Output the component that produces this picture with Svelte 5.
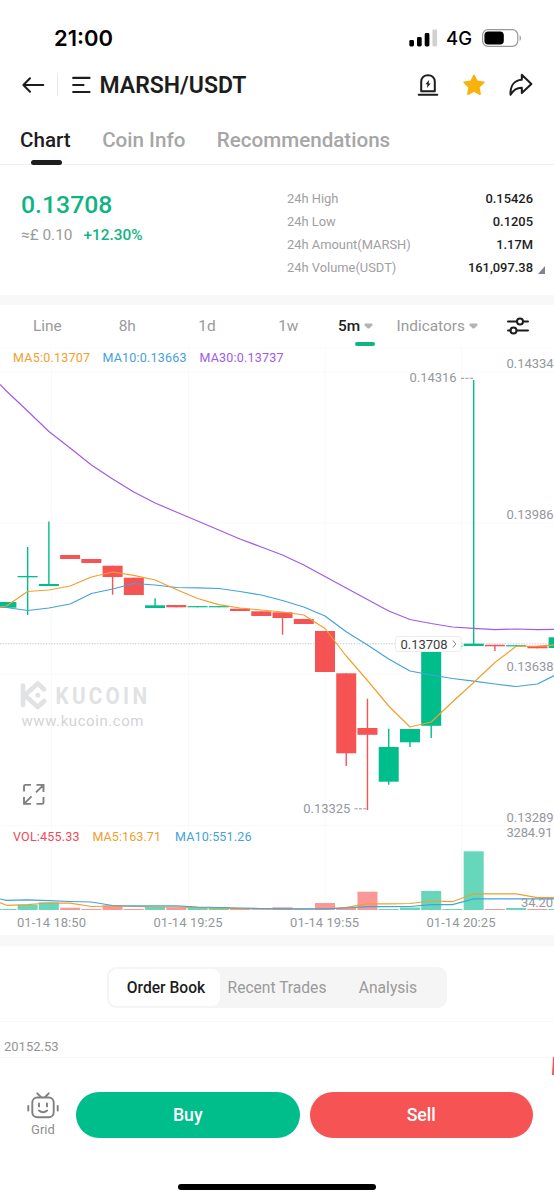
<script lang="ts">
	type Side = 'up' | 'down';

	interface Candle {
		side: Side;
		top: number;
		bottom: number;
		high?: number;
		low?: number;
		vol: number;
	}

	const STEP = 21.24;
	const FIRST_X = 6.4;
	const VOL_BASE = 910;

	const tabs = ['Chart', 'Coin Info', 'Recommendations'];
	const bookTabs = ['Order Book', 'Recent Trades', 'Analysis'];

	const stats = [
		{ label: '24h High', value: '0.15426' },
		{ label: '24h Low', value: '0.1205' },
		{ label: '24h Amount(MARSH)', value: '1.17M' },
		{ label: '24h Volume(USDT)', value: '161,097.38' }
	];

	// all y values share the chart viewBox
	const candles: Candle[] = [
		{ side: 'up', top: 602, bottom: 607.7, vol: 909 },
		{ side: 'up', top: 576, bottom: 577.3, high: 547, low: 615, vol: 904.7 },
		{ side: 'up', top: 584, bottom: 586, high: 521.5, vol: 902.3 },
		{ side: 'down', top: 555, bottom: 559, vol: 907.7 },
		{ side: 'down', top: 559, bottom: 563, vol: 909 },
		{ side: 'down', top: 565.7, bottom: 577, low: 594.7, vol: 905.3 },
		{ side: 'down', top: 577.7, bottom: 595, vol: 909 },
		{ side: 'up', top: 605.3, bottom: 608, high: 598.3, vol: 907 },
		{ side: 'down', top: 605, bottom: 607.3, vol: 907.3 },
		{ side: 'up', top: 606.1, bottom: 607.3, vol: 908 },
		{ side: 'up', top: 606.1, bottom: 607.3, vol: 907.7 },
		{ side: 'down', top: 608.7, bottom: 611, vol: 908.7 },
		{ side: 'down', top: 611.3, bottom: 616, vol: 909.2 },
		{ side: 'down', top: 612.3, bottom: 618, low: 634.7, vol: 907.3 },
		{ side: 'down', top: 619, bottom: 624, vol: 909.2 },
		{ side: 'down', top: 631, bottom: 672, vol: 903 },
		{ side: 'down', top: 673.3, bottom: 753.3, low: 766, vol: 908 },
		{ side: 'down', top: 728, bottom: 734.8, high: 698.7, low: 810, vol: 891.7 },
		{ side: 'up', top: 747, bottom: 781.7, high: 728.7, low: 784.7, vol: 909 },
		{ side: 'up', top: 729, bottom: 742.3, low: 747, vol: 907.5 },
		{ side: 'up', top: 645.5, bottom: 725.8, low: 738, vol: 891 },
		{ side: 'up', top: 645.7, bottom: 646.8, vol: 909 },
		{ side: 'up', top: 643.7, bottom: 646, high: 380, vol: 851.3 },
		{ side: 'down', top: 644.8, bottom: 646.3, low: 651, vol: 909 },
		{ side: 'up', top: 645.2, bottom: 646.4, vol: 908 },
		{ side: 'down', top: 646.2, bottom: 648.3, vol: 909 },
		{ side: 'up', top: 637.3, bottom: 648, vol: 909 }
	];

	const ma30 = [391, 411, 431.5, 448, 465, 479, 492, 503, 512, 521, 530, 539, 547, 555, 565, 576.5, 588, 599.5, 611, 619.5, 623.5, 627, 628.3, 629.6, 629, 629.7, 629.3];
	const ma5 = [606, 591.5, 590, 586, 577, 572, 575.3, 580, 589.5, 598.5, 604.7, 608, 610, 612, 615, 628.5, 656, 680.5, 706, 727, 722, 702, 682.5, 662.5, 646.3, 646, 644.8];
	const ma10 = [607.5, 610.5, 608, 604, 593.5, 589, 583.5, 585, 587.5, 587.8, 588.5, 591.5, 595, 600.5, 607, 616, 631.7, 645, 659, 671, 675, 678.5, 681.2, 684, 686.5, 684, 673.5];
	const vol5 = [905.3, 904.7, 903, 903.2, 906.5, 906, 906.5, 907, 907, 907.7, 908.2, 908.6, 908.8, 909, 909, 909, 907.3, 903.8, 903.8, 903.5, 901, 901.7, 893.8, 893.8, 893.8, 897.6, 897.6];
	const vol10 = [900.3, 899.8, 900.6, 901.5, 902, 905.5, 905.8, 905.8, 905.8, 907, 907.5, 908, 908.5, 908.8, 908.8, 908.8, 908, 906.7, 906.7, 906.5, 904.6, 904.6, 898.8, 898.8, 898.8, 898.8, 898.8];

	const gridRows = [372, 523, 674.3, 825.5];
	const gridCols = [51.5, 188.5, 325, 461.5];

	const priceTicks = [
		{ y: 368.4, label: '0.14334' },
		{ y: 519.4, label: '0.13986' },
		{ y: 671, label: '0.13638' },
		{ y: 822, label: '0.13289' }
	];
	const timeTicks = [
		{ x: 51.5, label: '01-14 18:50' },
		{ x: 188, label: '01-14 19:25' },
		{ x: 324.6, label: '01-14 19:55' },
		{ x: 461, label: '01-14 20:25' }
	];

	let activeTab = $state('Chart');
	let activeBook = $state('Order Book');

	function cx(i: number): number {
		return FIRST_X + i * STEP;
	}

	function line(values: number[], startY: number): string {
		return `0,${startY} ` + values.map((y, i) => `${cx(i).toFixed(1)},${y}`).join(' ');
	}
</script>

{#snippet caret()}
	<svg width="9" height="6" viewBox="0 0 9 6"><path d="M.6.4h7.8v1.8L5.2 5.4H3.8L.6 2.2z" /></svg>
{/snippet}

<div class="screen">
	<div class="status">
		<span class="time">21:00</span>
		<div class="signals">
			<svg width="29" height="18" viewBox="0 0 29 18">
				<rect x="0.3" y="11" width="4.7" height="6.5" rx="1.4" />
				<rect x="8" y="8" width="4.7" height="9.5" rx="1.4" />
				<rect x="15.7" y="4" width="4.7" height="13.5" rx="1.4" />
				<rect x="23.4" y="0.5" width="4.7" height="17" rx="1.4" fill="#d1d1d1" />
			</svg>
			<span class="network">4G</span>
			<svg width="40" height="18" viewBox="0 0 40 18">
				<rect x="0.6" y="0.7" width="35.2" height="16.6" rx="5.4" fill="none" stroke="#999" stroke-width="1.2" />
				<rect x="2.4" y="2.5" width="19.4" height="13" rx="3.8" />
				<path d="M37.6 6.2c1.8.6 1.8 5 0 5.6z" fill="#999" />
			</svg>
		</div>
	</div>

	<header>
		<svg width="24" height="20" viewBox="0 0 24 20">
			<path d="M22.3 10H2.4M9 3.3 2.4 10 9 16.7" />
		</svg>
		<span class="divider"></span>
		<svg class="menu" width="20" height="20" viewBox="0 0 20 20">
			<path d="M2.2 2.9H18.5M2.2 10H12.5M2.2 17H18.5" />
		</svg>
		<h1>MARSH/USDT</h1>
		<div class="actions">
			<svg width="22" height="24" viewBox="0 0 22 24">
				<path d="M4.2 18.2V8.8C4.2 4.9 7 2.2 11 2.2s6.8 2.7 6.8 6.6v9.4zM1.7 21.8h18.6" />
				<path d="m12.2 7-3.8 4.2h2.1L9.9 15l3.8-4.4h-2.1z" fill="#1d1d1d" stroke="none" />
			</svg>
			<svg width="24" height="24" viewBox="0 0 24 24">
				<path
					d="m12 2.3 3 6 6.9 1-5 5 1.2 6.9-6.1-3.1-6.1 3.1 1.2-6.9-5-5 6.9-1z"
					fill="#f8b20c"
					stroke="#f8b20c"
					stroke-width="1.6"
				/>
			</svg>
			<svg width="24" height="24" viewBox="0 0 24 24">
				<path d="M12.8 6.7V1.8L22.4 11l-9.6 9.1v-5.3C8 14.7 4.2 17.4 1.5 21.7 1.2 13.5 4.8 7.2 12.8 6.7z" />
			</svg>
		</div>
	</header>

	<nav>
		{#each tabs as tab}
			<button class="tab" class:active={tab === activeTab} onclick={() => (activeTab = tab)}>{tab}</button>
		{/each}
	</nav>

	<section class="ticker">
		<div class="quote">
			<div class="price">0.13708</div>
			<div class="change"><span>≈£ 0.10</span><b>+12.30%</b></div>
		</div>
		<dl>
			{#each stats as stat}
				<div class="stat">
					<dt>{stat.label}</dt>
					<dd>{stat.value}</dd>
				</div>
			{/each}
		</dl>
		<svg class="corner" width="7" height="8" viewBox="0 0 7 8"><path d="M7 0v8H0z" fill="#7c8494" /></svg>
	</section>

	<div class="intervals">
		<span>Line</span>
		<span>8h</span>
		<span>1d</span>
		<span>1w</span>
		<span class="current">5m {@render caret()}</span>
		<span class="indicators">Indicators {@render caret()}</span>
		<svg class="settings" width="24" height="20" viewBox="0 0 24 20">
			<path d="M2 5.5h8.5M17.5 5.5H22M2 14.5h2.5M11.5 14.5H22" />
			<circle cx="14" cy="5.5" r="3" />
			<circle cx="7.5" cy="14.5" r="3" />
		</svg>
	</div>

	<svg class="chart" width="554" height="588" viewBox="0 347 554 588">
		<g stroke="#f9f9fa">
			{#each gridRows as y}
				<line x1="0" x2="554" y1={y} y2={y} />
			{/each}
			{#each gridCols as x}
				<line x1={x} x2={x} y1="347" y2="910" />
			{/each}
			<line x1="0" x2="554" y1="347" y2="347" />
		</g>

		<g>
			<g fill="none" stroke="#e1e2e4" stroke-width="4.6" stroke-linecap="round" stroke-linejoin="round">
				<path d="M23 685.5v19.5M23 695.3h3M44 689.2l-6.2-5.8-13 11.9 13 11.7 6.5-6" />
			</g>
			<circle cx="37.8" cy="695.3" r="2.5" fill="#e1e2e4" />
			<text class="brand" transform="translate(55.5 704) scale(0.88 1)" textLength="104">KUCOIN</text>
			<text class="site" x="21.5" y="726" textLength="122">www.kucoin.com</text>
		</g>

		<line x1="0" x2="554" y1="643.8" y2="643.8" stroke="#bfc1c4" stroke-dasharray="1.2 1.5" />

		{#each candles as candle, i}
			<g class={candle.side}>
				<rect x={cx(i) - 10} y={candle.top} width="20" height={candle.bottom - candle.top} />
				<rect
					x={cx(i) - 0.7}
					y={candle.high ?? candle.top}
					width="1.4"
					height={(candle.low ?? candle.bottom) - (candle.high ?? candle.top)}
				/>
				<rect class="vol" x={cx(i) - 10} y={candle.vol} width="20" height={VOL_BASE - candle.vol} />
			</g>
		{/each}

		<g fill="none" stroke-width="1.2" stroke-linejoin="round">
			<polyline points={line(ma30, 384.5)} stroke="#a25ae8" />
			<polyline points={line(ma10, 606.5)} stroke="#45a2da" />
			<polyline points={line(ma5, 607)} stroke="#f0a030" />
			<polyline points={line(vol5, 902.5)} stroke="#f0a030" />
			<polyline points={line(vol10, 899)} stroke="#45a2da" />
		</g>

		<g class="legend">
			<text x="13" y="362" textLength="77" fill="#f0a030">MA5:0.13707</text>
			<text x="102.5" y="362" textLength="84" fill="#45a2da">MA10:0.13663</text>
			<text x="199.5" y="362" textLength="84" fill="#a25ae8">MA30:0.13737</text>
			<text x="13" y="841" textLength="66.5" fill="#ee4b59">VOL:455.33</text>
			<text x="92.5" y="841" textLength="68.5" fill="#f0a030">MA5:163.71</text>
			<text x="175" y="841" textLength="76.5" fill="#45a2da">MA10:551.26</text>
		</g>

		<g class="axis">
			{#each priceTicks as tick}
				<text x="506.5" y={tick.y} textLength="47">{tick.label}</text>
			{/each}
			<text x="506.5" y="837" textLength="46">3284.91</text>
			<text x="521" y="906.5" textLength="32">34.20</text>
			{#each timeTicks as tick}
				<text x={tick.x} y="926.5" text-anchor="middle" textLength="69">{tick.label}</text>
			{/each}
			<text x="409.5" y="382.4" textLength="47">0.14316</text>
			<text x="303.3" y="813" textLength="47">0.13325</text>
		</g>
		<path d="M461 378.3h12M354.5 808.8h12" stroke="#94979d" stroke-dasharray="3.2 1.2" />

		<rect x="395.5" y="636.5" width="65.5" height="15" rx="2.5" fill="#fff" stroke="#ececee" />
		<text class="last" x="400.5" y="649" textLength="47">0.13708</text>
		<path d="m453 640.5 2.8 3.5-2.8 3.5" fill="none" stroke="#888" />

		<g fill="none" stroke="#7f8082" stroke-width="1.9">
			<path d="M31 784.9h-5.5q-1.5 0-1.5 1.5v5M43.5 796.9v5.5q0 1.5-1.5 1.5h-5.5M36.5 784.9h7v7M43 785.4l-7 7M31 803.9h-7v-7M24.5 803.4l7-7" />
		</g>
	</svg>

	<section class="book">
		<div class="segmented">
			{#each bookTabs as tab}
				<button class:active={tab === activeBook} onclick={() => (activeBook = tab)}>{tab}</button>
			{/each}
		</div>
		<div class="depth">
			<span>20152.53</span>
		</div>
	</section>

	<footer>
		<svg class="sliver" width="2" height="18" viewBox="0 0 2 18"><path d="M1 0h1v18H0z" fill="#f65354" /></svg>
		<div class="trade">
			<div class="grid-bot">
				<svg width="32" height="27" viewBox="0 0 32 27">
					<rect x="5.3" y="5.5" width="21.4" height="19.8" rx="5" />
					<path d="m10.3 1.3 3.5 3.7M21.7 1.3 18.2 5M12 11.5v3M20 11.5v3M12 18.5q4 3.3 8.2 0" />
					<path d="M1.3 14v4.5M30.7 14v4.5" />
				</svg>
				<span>Grid</span>
			</div>
			<button class="buy">Buy</button>
			<button class="sell">Sell</button>
		</div>
		<div class="home"></div>
	</footer>
</div>

<style>
	:global(body) {
		background: #fff;
	}

	.screen {
		width: 554px;
		height: 1200px;
		overflow: hidden;
		background: #fff;
		color: #1d1d1d;
		font-family: Roboto, 'Liberation Sans', sans-serif;
	}

	svg {
		display: block;
		flex: none;
	}

	button {
		padding: 0;
		border: 0;
		background: none;
		font: inherit;
		color: inherit;
	}

	.status {
		display: flex;
		align-items: center;
		justify-content: space-between;
		height: 60px;
		padding: 15px 32px 0 54px;
		box-sizing: border-box;
		font-family: Inter, sans-serif;
		color: #000;
	}

	.time {
		font-size: 22px;
		font-weight: 600;
	}

	.signals {
		display: flex;
		align-items: center;
	}

	.network {
		margin: 1px 10px 0 8px;
		font-size: 18.5px;
		font-weight: 500;
	}

	header {
		display: flex;
		align-items: center;
		height: 50px;
		padding: 0 21px;
	}

	header svg {
		fill: none;
		stroke: #1d1d1d;
		stroke-width: 2;
		stroke-linecap: round;
		stroke-linejoin: round;
	}

	.divider {
		width: 1px;
		height: 22px;
		margin: 0 13px 0 12px;
		background: #eaeaea;
	}

	header .menu {
		stroke-width: 2.2;
	}

	h1 {
		margin: 0 0 0 8.5px;
		font-size: 23px;
		font-weight: 600;
	}

	.actions {
		display: flex;
		align-items: center;
		gap: 23px;
		margin-left: auto;
	}

	nav {
		display: flex;
		gap: 31.5px;
		height: 55px;
		padding: 0 20px;
		border-bottom: 1px solid #efefef;
		box-sizing: border-box;
	}

	.tab {
		position: relative;
		height: 59px;
		box-sizing: border-box;
		font-size: 20.6px;
		font-weight: 500;
		color: #a6a6a6;
	}

	.tab.active {
		color: #1d1d1d;
	}

	.tab.active::after {
		content: '';
		position: absolute;
		left: 10.5px;
		top: 50px;
		width: 31px;
		height: 5px;
		border-radius: 3px;
		background: #1d1d1d;
	}

	.ticker {
		position: relative;
		display: flex;
		justify-content: space-between;
		height: 130px;
		padding: 22px 21px 0;
		box-sizing: border-box;
	}

	.price {
		font-size: 24.8px;
		line-height: 36px;
		font-weight: 500;
		color: #0fb483;
	}

	.change {
		display: flex;
		gap: 11px;
		font-size: 15.4px;
		line-height: 24px;
		color: #9a9a9a;
	}

	.change b {
		font-weight: 500;
		color: #0fb483;
	}

	dl {
		width: 246px;
		margin: 0;
	}

	.stat {
		display: flex;
		justify-content: space-between;
		font-size: 12.9px;
		line-height: 23.1px;
	}

	dt {
		color: #9fa0a2;
	}

	dd {
		margin: 0;
		font-weight: 500;
	}

	.corner {
		position: absolute;
		right: 9px;
		top: 101px;
	}

	.intervals {
		display: flex;
		align-items: center;
		height: 52px;
		padding: 0 24px 0 33px;
		border-top: 10px solid #f8f8f8;
		box-sizing: border-box;
		font-size: 15.4px;
		color: #9a9a9a;
	}

	.intervals span {
		margin-right: 57px;
	}

	.intervals span:nth-child(2),
	.intervals span:nth-child(3) {
		margin-right: 62.5px;
	}

	.intervals .current {
		position: relative;
		display: flex;
		align-items: center;
		gap: 3.5px;
		margin-left: -17.5px;
		margin-right: 24px;
		font-weight: 500;
		color: #1d1d1d;
	}

	.intervals .current::after {
		content: '';
		position: absolute;
		right: -2px;
		top: 25px;
		width: 20px;
		height: 3.5px;
		border-radius: 2px;
		background: #0fb483;
	}

	.intervals span svg {
		fill: #b3b3b3;
	}

	.intervals .indicators {
		display: flex;
		align-items: center;
		gap: 4px;
		margin-right: auto;
	}

	.settings {
		fill: none;
		stroke: #1d1d1d;
		stroke-width: 2;
		stroke-linecap: round;
	}

	.up {
		fill: #00bd8c;
	}

	.down {
		fill: #f65354;
	}

	.vol {
		opacity: 0.6;
	}

	.legend text {
		font-size: 12.5px;
	}

	.axis text {
		font-size: 13px;
		fill: #94979d;
	}

	.last {
		font-size: 13px;
		fill: #3d3d3d;
	}

	.brand {
		font-size: 23.5px;
		font-weight: 700;
		fill: #e1e2e4;
	}

	.site {
		font-size: 15px;
		fill: #d4d4d6;
	}

	.book {
		height: 122px;
		border-top: 11px solid #f8f8f8;
		box-sizing: border-box;
	}

	.segmented {
		display: flex;
		width: 340px;
		height: 41px;
		margin: 21px 0 0 107px;
		padding: 2px;
		border-radius: 9px;
		background: #f5f5f5;
		box-sizing: border-box;
		font-size: 15.6px;
		color: #9a9a9a;
	}

	.segmented button {
		width: 111px;
		padding-left: 3px;
		border-radius: 8px;
		white-space: nowrap;
	}

	.segmented button.active {
		background: #fff;
		font-weight: 500;
		color: #1d1d1d;
	}

	.depth {
		margin-top: 13px;
		padding: 16px 4px 0;
		border-top: 1px solid #f7f7f7;
		font-size: 13px;
		line-height: 18px;
		color: #949494;
	}

	footer {
		position: relative;
		height: 143px;
		border-top: 1px solid #f7f7f7;
		background: #fff;
		box-sizing: border-box;
	}

	.sliver {
		position: absolute;
		right: 0;
		top: -1px;
	}

	.trade {
		display: flex;
		align-items: flex-start;
		gap: 10px;
		padding: 34px 21px 0 27px;
	}

	.grid-bot {
		display: flex;
		flex-direction: column;
		align-items: center;
		gap: 3px;
		width: 32px;
		height: 46px;
		margin-right: 7px;
		font-size: 13px;
		line-height: 16px;
		color: #8e8e8e;
	}

	.grid-bot svg {
		fill: none;
		stroke: #808080;
		stroke-width: 1.9;
		stroke-linecap: round;
	}

	.buy,
	.sell {
		flex: 1;
		height: 46px;
		border-radius: 23px;
		background: #00bd8c;
		font-size: 17.7px;
		font-weight: 500;
		color: #fff;
	}

	.sell {
		background: #f65354;
	}

	.home {
		width: 198px;
		height: 6px;
		margin: 45.5px 0 0 178px;
		border-radius: 3px;
		background: #000;
	}
</style>
